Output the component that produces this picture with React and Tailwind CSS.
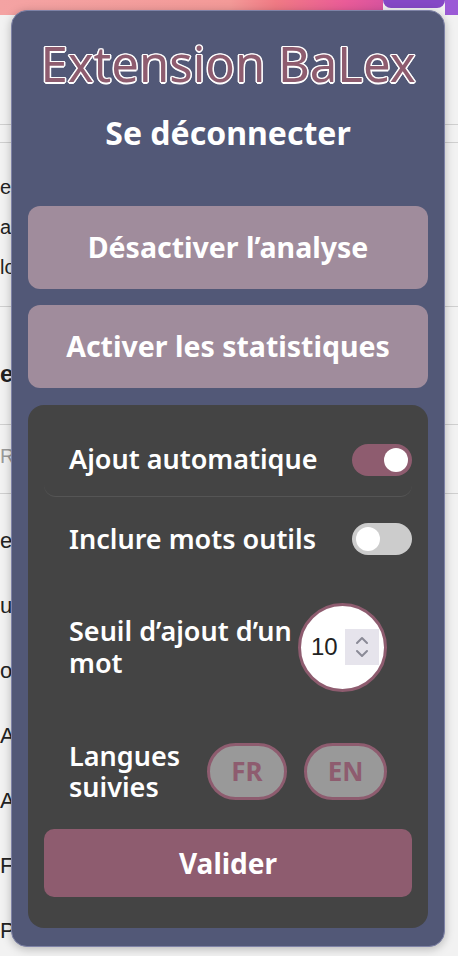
import React from "react";

const maroon = "#8e5c6f";

const Toggle = ({ on }) => (
  <div
    className={`flex h-[32px] w-[60px] shrink-0 items-center rounded-full px-[4px] ${
      on ? "justify-end bg-[#8e5c6f]" : "justify-start bg-[#cccccc]"
    }`}
  >
    <div className="h-[24px] w-[24px] rounded-full bg-white" />
  </div>
);

const Pill = ({ label, width }) => (
  <div
    className={`flex h-[57px] items-center justify-center rounded-full border-[3px] border-[#8e5c6f] bg-[#999999] text-[26px] font-bold text-[#8e5c6f] ${width}`}
  >
    {label}
  </div>
);

const BgLine = ({ children, className = "" }) => (
  <div className={`flex h-[40px] items-center whitespace-nowrap ${className}`}>{children}</div>
);

const App = () => {
  const tailRows = ["e", "u", "or", "A", "A", "F", "Points de terminaison d’un mot"];

  return (
    <div className="relative h-[956px] w-[458px] overflow-hidden bg-[#f2f2f2] font-['Liberation_Sans',sans-serif] text-[20px] text-[#222]">
      {/* Page behind the popup */}
      <div className="flex h-[15px]">
        <div className="flex-1 bg-[linear-gradient(90deg,#f4a3a3_0%,#f39a98_60%,#f07a84_72%,#ea5c98_90%,#d9549f_100%)]" />
        <div className="h-[8px] w-[62px] rounded-b-[8px] bg-[#8548c6]" />
        <div className="w-[13px] bg-[#9b5ad6]" />
      </div>
      <div className="h-[109px]" />
      <div className="h-[19px] border-y border-[#cfcfcf]" />
      <div className="pt-[24px] pb-[19px]">
        <BgLine>e</BgLine>
        <BgLine>a</BgLine>
        <BgLine>lo</BgLine>
      </div>
      <div className="border-t border-[#cfcfcf] pt-[47px] pb-[30px]">
        <BgLine className="text-[24px] font-bold">e</BgLine>
      </div>
      <div className="border-t border-[#cfcfcf] pt-[11px] pb-[17px]">
        <BgLine className="text-[#9a9a9a]">Re</BgLine>
      </div>
      <div className="border-t border-[#cfcfcf] pt-[14px]">
        {tailRows.map((t, i) => (
          <div key={i} className="flex h-[65px] items-center whitespace-nowrap text-[22px]">
            {t}
          </div>
        ))}
      </div>

      {/* Popup */}
      <div className="absolute left-[11px] top-[10px] flex h-[937px] w-[434px] flex-col rounded-[16px] border border-[#7e82a6] bg-[#525877] px-[16px] font-['Noto_Sans',sans-serif] text-white shadow-[0_2px_10px_rgba(0,0,0,0.25)]">
        <h1
          className="pt-[20px] text-center text-[49px] font-normal leading-[64px] text-[#8e5c6f] [text-shadow:1.5px_0_0_#fff,-1.5px_0_0_#fff,0_1.5px_0_#fff,0_-1.5px_0_#fff,1px_1px_0_#fff,-1px_-1px_0_#fff,1px_-1px_0_#fff,-1px_1px_0_#fff]"
        >
          Extension BaLex
        </h1>
        <div className="mt-[18px] text-center text-[32px] font-bold leading-[40px]">Se déconnecter</div>

        <div className="mt-[53px] flex h-[83px] items-center justify-center rounded-[12px] bg-[#a08c9c] text-[28.5px] font-bold">
          Désactiver l’analyse
        </div>
        <div className="mt-[16px] flex h-[83px] items-center justify-center rounded-[12px] bg-[#a08c9c] text-[28.5px] font-bold">
          Activer les statistiques
        </div>

        {/* Options panel */}
        <div className="mt-[17px] flex h-[523px] flex-col rounded-[16px] bg-[#444444] px-[16px] pt-[18px] text-[27px] font-semibold">
          <div className="flex h-[74px] items-center justify-between rounded-[12px] border-b border-[#555555] pl-[25px]">
            <span>Ajout automatique</span>
            <Toggle on />
          </div>
          <div className="flex h-[84px] items-center justify-between pl-[25px]">
            <span>Inclure mots outils</span>
            <Toggle />
          </div>
          <div className="flex h-[132px] items-center justify-between pl-[25px] pr-[25px]">
            <span className="w-[225px] leading-[32px]">Seuil d’ajout d’un mot</span>
            <div className="flex h-[89px] w-[89px] items-center rounded-full border-[3px] border-[#8e5c6f] bg-white pl-[10px]">
              <span className="font-['Liberation_Sans',sans-serif] text-[24px] font-normal text-[#222]">10</span>
              <div className="ml-[7px] flex h-[36px] w-[34px] items-center justify-center bg-[#e6e4ec]">
                <svg width="16" height="26" viewBox="0 0 16 26" fill="none" stroke="#8a8a96" strokeWidth="2" strokeLinecap="round" strokeLinejoin="round">
                  <path d="M3 9 L8 4 L13 9" />
                  <path d="M3 17 L8 22 L13 17" />
                </svg>
              </div>
            </div>
          </div>
          <div className="flex h-[116px] items-center justify-between pl-[25px] pr-[25px]">
            <span className="leading-[31px]">
              Langues
              <br />
              suivies
            </span>
            <div className="flex gap-[17px]">
              <Pill label="FR" width="w-[80px]" />
              <Pill label="EN" width="w-[83px]" />
            </div>
          </div>
          <div
            className="flex h-[68px] items-center justify-center rounded-[10px] text-[28px] font-bold"
            style={{ backgroundColor: maroon }}
          >
            Valider
          </div>
        </div>
      </div>
    </div>
  );
};

export default App;
